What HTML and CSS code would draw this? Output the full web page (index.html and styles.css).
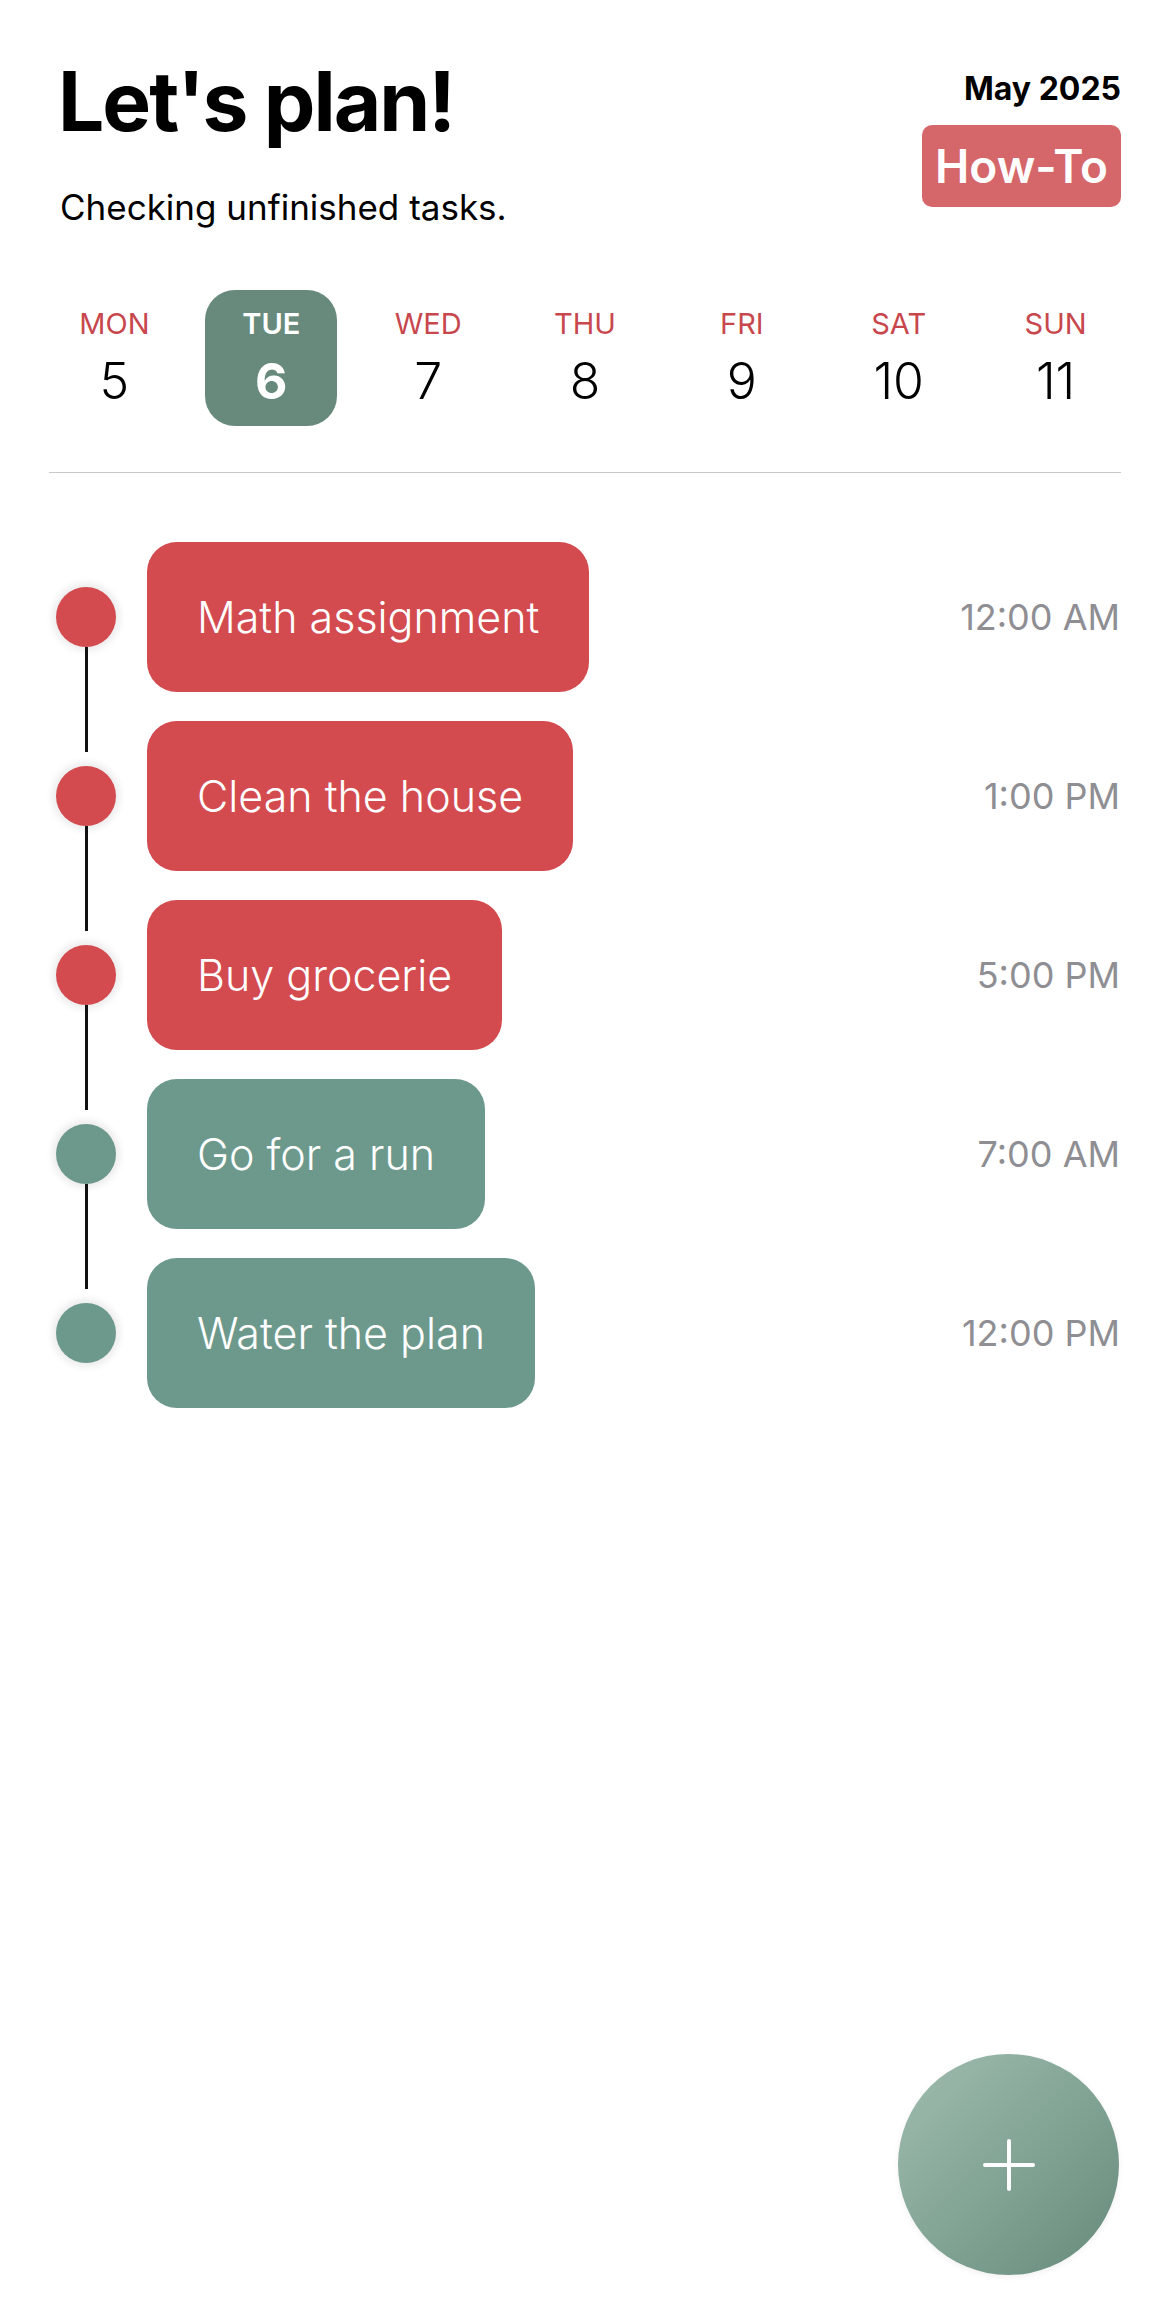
FILE: index.html
```html
<!DOCTYPE html>
<html lang="en">
<head>
<meta charset="utf-8">
<title>Let's plan!</title>
<link rel="stylesheet" href="styles.css">
</head>
<body>
<div class="screen">
  <header class="header">
    <div class="header-left">
      <h1 class="title">Let's plan!</h1>
      <p class="subtitle">Checking unfinished tasks.</p>
    </div>
    <div class="header-right">
      <div class="month">May 2025</div>
      <button class="howto">How-To</button>
    </div>
  </header>

  <nav class="days">
    <div class="day"><span class="day-name">MON</span><span class="day-num">5</span></div>
    <div class="day day-active"><span class="day-name">TUE</span><span class="day-num">6</span></div>
    <div class="day"><span class="day-name">WED</span><span class="day-num">7</span></div>
    <div class="day"><span class="day-name">THU</span><span class="day-num">8</span></div>
    <div class="day"><span class="day-name">FRI</span><span class="day-num">9</span></div>
    <div class="day"><span class="day-name">SAT</span><span class="day-num">10</span></div>
    <div class="day"><span class="day-name">SUN</span><span class="day-num">11</span></div>
  </nav>

  <hr class="divider">

  <ul class="tasks">
    <li class="task task-red">
      <span class="marker"><span class="dot"></span></span>
      <span class="pill">Math assignment</span>
      <span class="time">12:00 AM</span>
    </li>
    <li class="task task-red">
      <span class="marker"><span class="dot"></span></span>
      <span class="pill">Clean the house</span>
      <span class="time">1:00 PM</span>
    </li>
    <li class="task task-red">
      <span class="marker"><span class="dot"></span></span>
      <span class="pill">Buy grocerie</span>
      <span class="time">5:00 PM</span>
    </li>
    <li class="task task-green">
      <span class="marker"><span class="dot"></span></span>
      <span class="pill">Go for a run</span>
      <span class="time">7:00 AM</span>
    </li>
    <li class="task task-green task-last">
      <span class="marker"><span class="dot"></span></span>
      <span class="pill">Water the plan</span>
      <span class="time">12:00 PM</span>
    </li>
  </ul>

  <button class="fab" aria-label="Add task">
    <svg width="56" height="56" viewBox="0 0 56 56" aria-hidden="true">
      <path d="M28 4 V52 M4 28 H52" stroke="#ffffff" stroke-width="4" stroke-linecap="round" fill="none"/>
    </svg>
  </button>
</div>
</body>
</html>
```

FILE: styles.css
```css
* {
  box-sizing: border-box;
}

html, body {
  margin: 0;
  padding: 0;
  background: #ffffff;
}

body {
  font-family: Inter, "Noto Sans", "Liberation Sans", sans-serif;
  color: #000000;
}

.screen {
  position: relative;
  width: 1170px;
  height: 2318px;
  overflow: hidden;
}

/* Header */
.header {
  display: flex;
  justify-content: space-between;
  align-items: flex-start;
  padding: 61px 49px 0 58px;
}

.header-left {
  display: flex;
  flex-direction: column;
}

.title {
  margin: 0;
  font-size: 82px;
  line-height: 1;
  font-weight: 700;
  letter-spacing: -2px;
}

.subtitle {
  margin: 47px 0 0 2px;
  font-size: 35px;
  line-height: 1;
  font-weight: 400;
}

.header-right {
  display: flex;
  flex-direction: column;
  align-items: flex-end;
  margin-top: 12px;
}

.month {
  font-size: 32px;
  line-height: 1;
  font-weight: 700;
}

.howto {
  margin-top: 20px;
  width: 199px;
  height: 82px;
  border: none;
  border-radius: 10px;
  background: #d5676b;
  color: #ffffff;
  font-family: inherit;
  font-size: 46px;
  line-height: 1;
  font-weight: 600;
  padding: 0;
  display: flex;
  align-items: center;
  justify-content: center;
}

/* Day strip */
.days {
  display: grid;
  grid-template-columns: repeat(7, 1fr);
  padding: 0 36px;
  margin-top: 65px;
}

.day {
  justify-self: center;
  width: 132px;
  display: flex;
  flex-direction: column;
  align-items: center;
  gap: 18px;
  padding: 19px 0 20px;
  border-radius: 30px;
}

.day-name {
  font-size: 29px;
  line-height: 1;
  color: #c8474d;
  font-weight: 400;
}

.day-num {
  font-size: 50px;
  line-height: 1;
  font-weight: 300;
  color: #000000;
}

.day-active {
  background: #678a7c;
}

.day-active .day-name,
.day-active .day-num {
  color: #ffffff;
  font-weight: 700;
}

.day-active .day-name {
  font-weight: 600;
}

.divider {
  margin: 46px 49px 0;
  border: none;
  height: 1px;
  background: #c9c9cb;
}

/* Tasks */
.tasks {
  list-style: none;
  margin: 69px 0 0;
  padding: 0 50px 0 56px;
  display: flex;
  flex-direction: column;
  gap: 29px;
}

.task {
  display: flex;
  align-items: center;
  height: 150px;
}

.marker {
  position: relative;
  width: 60px;
  height: 60px;
  flex: none;
}

.marker::after {
  content: "";
  position: absolute;
  left: 28.5px;
  top: 60px;
  width: 3px;
  height: 105px;
  background: #111111;
}

.task-last .marker::after {
  display: none;
}

.dot {
  display: block;
  width: 60px;
  height: 60px;
  border-radius: 50%;
  box-shadow: 0 0 7px 4px rgba(0, 0, 0, 0.08);
}

.pill {
  margin-left: 31px;
  height: 150px;
  display: flex;
  align-items: center;
  padding: 0 50px;
  border-radius: 30px;
  color: #ffffff;
  font-size: 43px;
  font-weight: 300;
  line-height: 1;
  white-space: nowrap;
}

.task-red .dot,
.task-red .pill {
  background: #d34a4f;
}

.task-green .dot,
.task-green .pill {
  background: #6d998d;
}

.time {
  margin-left: auto;
  font-size: 36px;
  line-height: 1;
  color: #8e8e93;
  font-weight: 400;
}

/* Floating action button */
.fab {
  position: absolute;
  right: 51px;
  bottom: 43px;
  width: 221px;
  height: 221px;
  border-radius: 50%;
  border: none;
  padding: 0;
  background: linear-gradient(135deg, #a0bdaf 0%, #83a595 50%, #668a7a 100%);
  box-shadow: 0 2px 6px rgba(0, 0, 0, 0.06);
  display: flex;
  align-items: center;
  justify-content: center;
}
```
